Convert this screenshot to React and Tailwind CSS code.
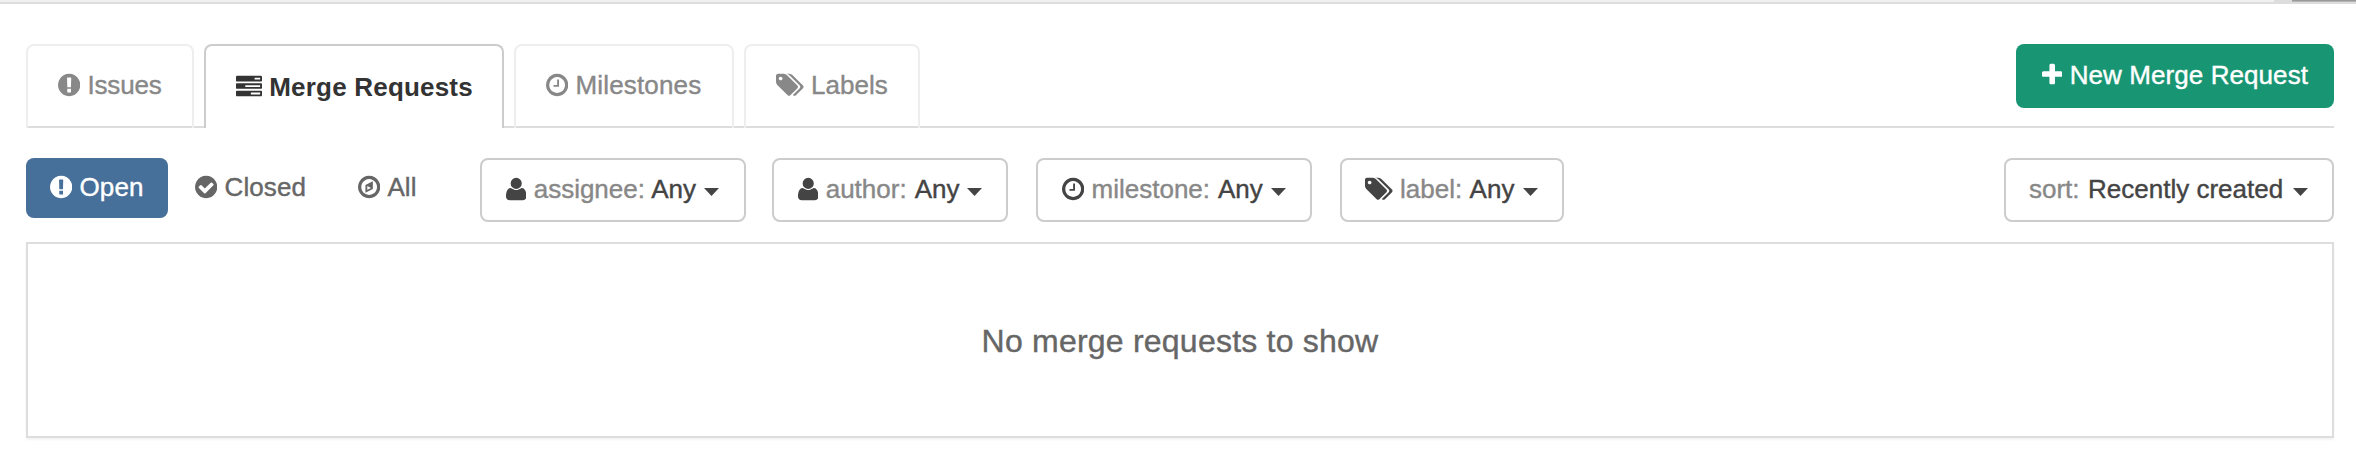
import React from "react";

const RING =
  "M1664 896q0 209-103 385.5t-279.5 279.5-385.5 103-385.5-103-279.5-279.5-103-385.5 103-385.5 279.5-279.5 385.5-103 385.5 103 279.5 279.5 103 385.5z";
const HOLE =
  "M1440 896q0-148-73-273t-198-198-273-73-273 73-198 198-73 273 73 273 198 198 273 73 273-73 198-198 73-273z";
const bar = (y) =>
  `M1792 ${y}v256q0 26-19 45t-45 19h-1664q-26 0-45-19t-19-45v-256q0-26 19-45t45-19h1664q26 0 45 19t19 45z`;

const ICONS = {
  exclamation: {
    x: 128,
    w: 1536,
    d: "M896 128q209 0 385.5 103t279.5 279.5 103 385.5-103 385.5-279.5 279.5-385.5 103-385.5-103-279.5-279.5-103-385.5 103-385.5 279.5-279.5 385.5-103zm128 1247v-190q0-14-9-23.5t-22-9.5h-192q-13 0-23 10t-10 23v190q0 13 10 23t23 10h192q13 0 22-9.5t9-23.5zm-2-344l18-621q0-12-10-18-10-8-24-8h-220q-14 0-24 8-10 6-10 18l17 621q0 10 10 17.5t24 7.5h185q14 0 23.5-7.5t10.5-17.5z",
  },
  check: {
    x: 128,
    w: 1536,
    d: "M1412 734q0-28-18-46l-91-90q-19-19-45-19t-45 19l-408 407-226-226q-19-19-45-19t-45 19l-91 90q-18 18-18 46 0 27 18 45l362 362q19 19 45 19 27 0 46-19l543-543q18-18 18-45z" + RING,
  },
  clock: {
    x: 128,
    w: 1536,
    d: "M1024 544v448q0 14-9 23t-23 9h-320q-14 0-23-9t-9-23v-64q0-14 9-23t23-9h224v-352q0-14 9-23t23-9h64q14 0 23 9t9 23z" + HOLE + RING,
  },
  compass: {
    x: 128,
    w: 1536,
    d: "M768 1088l256-128-256-128v256zM1152 497v542l-512 256v-542z" + HOLE + RING,
  },
  tags: {
    x: 0,
    w: 1920,
    d: "M448 448q0-53-37.5-90.5t-90.5-37.5-90.5 37.5-37.5 90.5 37.5 90.5 90.5 37.5 90.5-37.5 37.5-90.5zm1067 576q0 53-37 90l-491 492q-39 37-91 37-53 0-90-37l-715-716q-38-37-64.5-101t-26.5-117v-416q0-52 38-90t90-38h416q53 0 117 26.5t102 64.5l715 714q37 39 37 91zm384 0q0 53-37 90l-491 492q-39 37-91 37-36 0-59-14t-53-45l470-470q37-37 37-90 0-52-37-91l-715-714q-38-38-102-64.5t-117-26.5h224q53 0 117 26.5t102 64.5l715 714q37 39 37 91z",
  },
  tasks: {
    x: 0,
    w: 1792,
    d: "M1024 1408h640v-128h-640v128zM640 896h1024v-128h-1024v128zM1280 384h384v-128h-384v128z" + bar(192) + bar(704) + bar(1216),
  },
  user: {
    x: 0,
    w: 1408,
    flip: true,
    d: "M1408 131q0 -120 -73 -189.5t-194 -69.5h-874q-121 0 -194 69.5t-73 189.5q0 53 3.5 103.5t14 109t26.5 108.5t43 97.5t62 81t85.5 53.5t111.5 20q9 0 42 -21.5t74.5 -48t108 -48t133.5 -21.5t133.5 21.5t108 48t74.5 48t42 21.5q61 0 111.5 -20t85.5 -53.5t62 -81t43 -97.5t26.5 -108.5t14 -109t3.5 -103.5zM1088 1024q0 -159 -112.5 -271.5t-271.5 -112.5t-271.5 112.5t-112.5 271.5t112.5 271.5t271.5 112.5t271.5 -112.5t112.5 -271.5z",
  },
  plus: {
    x: 0,
    w: 1408,
    flip: true,
    d: "M1408 800v-192q0 -40 -28 -68t-68 -28h-416v-416q0 -40 -28 -68t-68 -28h-192q-40 0 -68 28t-28 68v416h-416q-40 0 -68 28t-28 68v192q0 40 28 68t68 28h416v416q0 40 28 68t68 28h192q40 0 68 -28t28 -68v-416h416q40 0 68 -28t28 -68z",
  },
};

function Icon({ name }) {
  const { x, w, d, flip } = ICONS[name];
  return (
    <svg
      viewBox={`${x} 0 ${w} 1792`}
      width={(w * 26) / 1792}
      height="26"
      fill="currentColor"
      fillRule="evenodd"
      className="mt-0.5 mr-[7.25px] shrink-0"
      aria-hidden="true"
    >
      <path d={d} transform={flip ? "translate(0 1536) scale(1 -1)" : undefined} />
    </svg>
  );
}

function Tab({ icon, active, className, children }) {
  return (
    <a
      className={`flex items-start rounded-t-lg border-2 border-b-0 pl-[30px] ${
        active
          ? "h-[84px] border-[#ccc] bg-white pt-[26px] font-bold text-[#333] [-webkit-text-stroke:0px]"
          : "h-[84px] border-[#eee] pt-6 text-[#888]"
      } ${className}`}
    >
      <Icon name={icon} />
      <span>{children}</span>
    </a>
  );
}

function Caret() {
  return (
    <svg width="15" height="8" viewBox="0 0 15 8" fill="currentColor" className="mt-3.5 shrink-0" aria-hidden="true">
      <path d="M0 0h15l-7.5 8z" />
    </svg>
  );
}

function Dropdown({ icon, label, value, className, labelWidth, valueWidth }) {
  return (
    <button
      className={`flex h-16 shrink-0 items-start rounded-lg border-2 border-[#ccc] bg-white pt-3.5 text-left text-[#444] ${className}`}
    >
      {icon && <Icon name={icon} />}
      <span className={`shrink-0 text-[#888] ${labelWidth}`}>{label}:</span>
      <span className={`shrink-0 ${valueWidth}`}>{value}</span>
      <Caret />
    </button>
  );
}

export default function App() {
  return (
    <div className="h-[454px] w-[2356px] overflow-hidden bg-white font-['Liberation_Sans',Arial,sans-serif] text-[26px] leading-[30px] whitespace-nowrap [-webkit-text-stroke:0.4px]">
      <div className="flex h-1 border-b-2 border-[#ddd] bg-[#f0f0f0]">
        <div className="ml-auto w-[82px] bg-[#ddd] pl-[18px]">
          <div className="h-px rounded-l bg-[#999]" />
          <div className="h-px bg-[#b5b5b5]" />
        </div>
      </div>

      <nav className="mx-[22px] ml-[26px] mt-10 flex h-[84px] items-start gap-2.5 bg-[linear-gradient(#ddd,#ddd)] bg-[length:100%_2px] bg-bottom bg-no-repeat">
        <Tab icon="exclamation" className="w-[168px] tracking-[-0.2px]">Issues</Tab>
        <Tab icon="tasks" active className="w-[300px] tracking-[0.2px]">Merge Requests</Tab>
        <Tab icon="clock" className="w-[220px] tracking-[0.15px]">Milestones</Tab>
        <Tab icon="tags" className="w-[176px]">Labels</Tab>
        <a className="ml-auto flex h-16 w-[318px] items-start rounded-lg bg-[#189673] pt-4 pl-[26px] text-white">
          <Icon name="plus" />
          <span className="tracking-[0.08px]">New Merge Request</span>
        </a>
      </nav>

      <div className="mx-[22px] ml-[26px] mt-[30px] flex items-start">
        <a className="flex h-[60px] w-[142px] items-start rounded-lg bg-[#466f99] pt-3.5 pl-6 text-white">
          <Icon name="exclamation" />
          <span className="tracking-[0.1px]">Open</span>
        </a>
        <a className="ml-[27px] flex w-[163px] items-start pt-3.5 text-[#666]">
          <Icon name="check" />
          <span className="tracking-[0.1px]">Closed</span>
        </a>
        <a className="flex w-[122px] items-start pt-3.5 text-[#666]">
          <Icon name="compass" />
          <span>All</span>
        </a>
        <Dropdown icon="user" label="assignee" value="Any" className="w-[266px] pl-6" labelWidth="w-[117.5px]" valueWidth="w-[52.75px]" />
        <Dropdown icon="user" label="author" value="Any" className="ml-[26px] w-[236px] pl-6" labelWidth="w-[89px]" valueWidth="w-[52.25px]" />
        <Dropdown icon="clock" label="milestone" value="Any" className="ml-7 w-[276px] pl-6" labelWidth="w-[126.5px]" valueWidth="w-[52.5px]" />
        <Dropdown icon="tags" label="label" value="Any" className="ml-7 w-[224px] pl-[23px]" labelWidth="w-[69.5px]" valueWidth="w-[53px]" />
        <Dropdown label="sort" value="Recently created" className="ml-auto w-[330px] pl-[23px]" labelWidth="w-[59px]" valueWidth="w-[205px]" />
      </div>

      <section className="mx-[22px] ml-[26px] mt-5 flex h-[196px] items-center justify-center border-2 border-[#ddd] pt-px shadow-[0_2px_2px_rgba(0,0,0,0.05)]">
        <h4 className="text-[32px] leading-9 tracking-[0.22px] text-[#666]">No merge requests to show</h4>
      </section>
    </div>
  );
}
